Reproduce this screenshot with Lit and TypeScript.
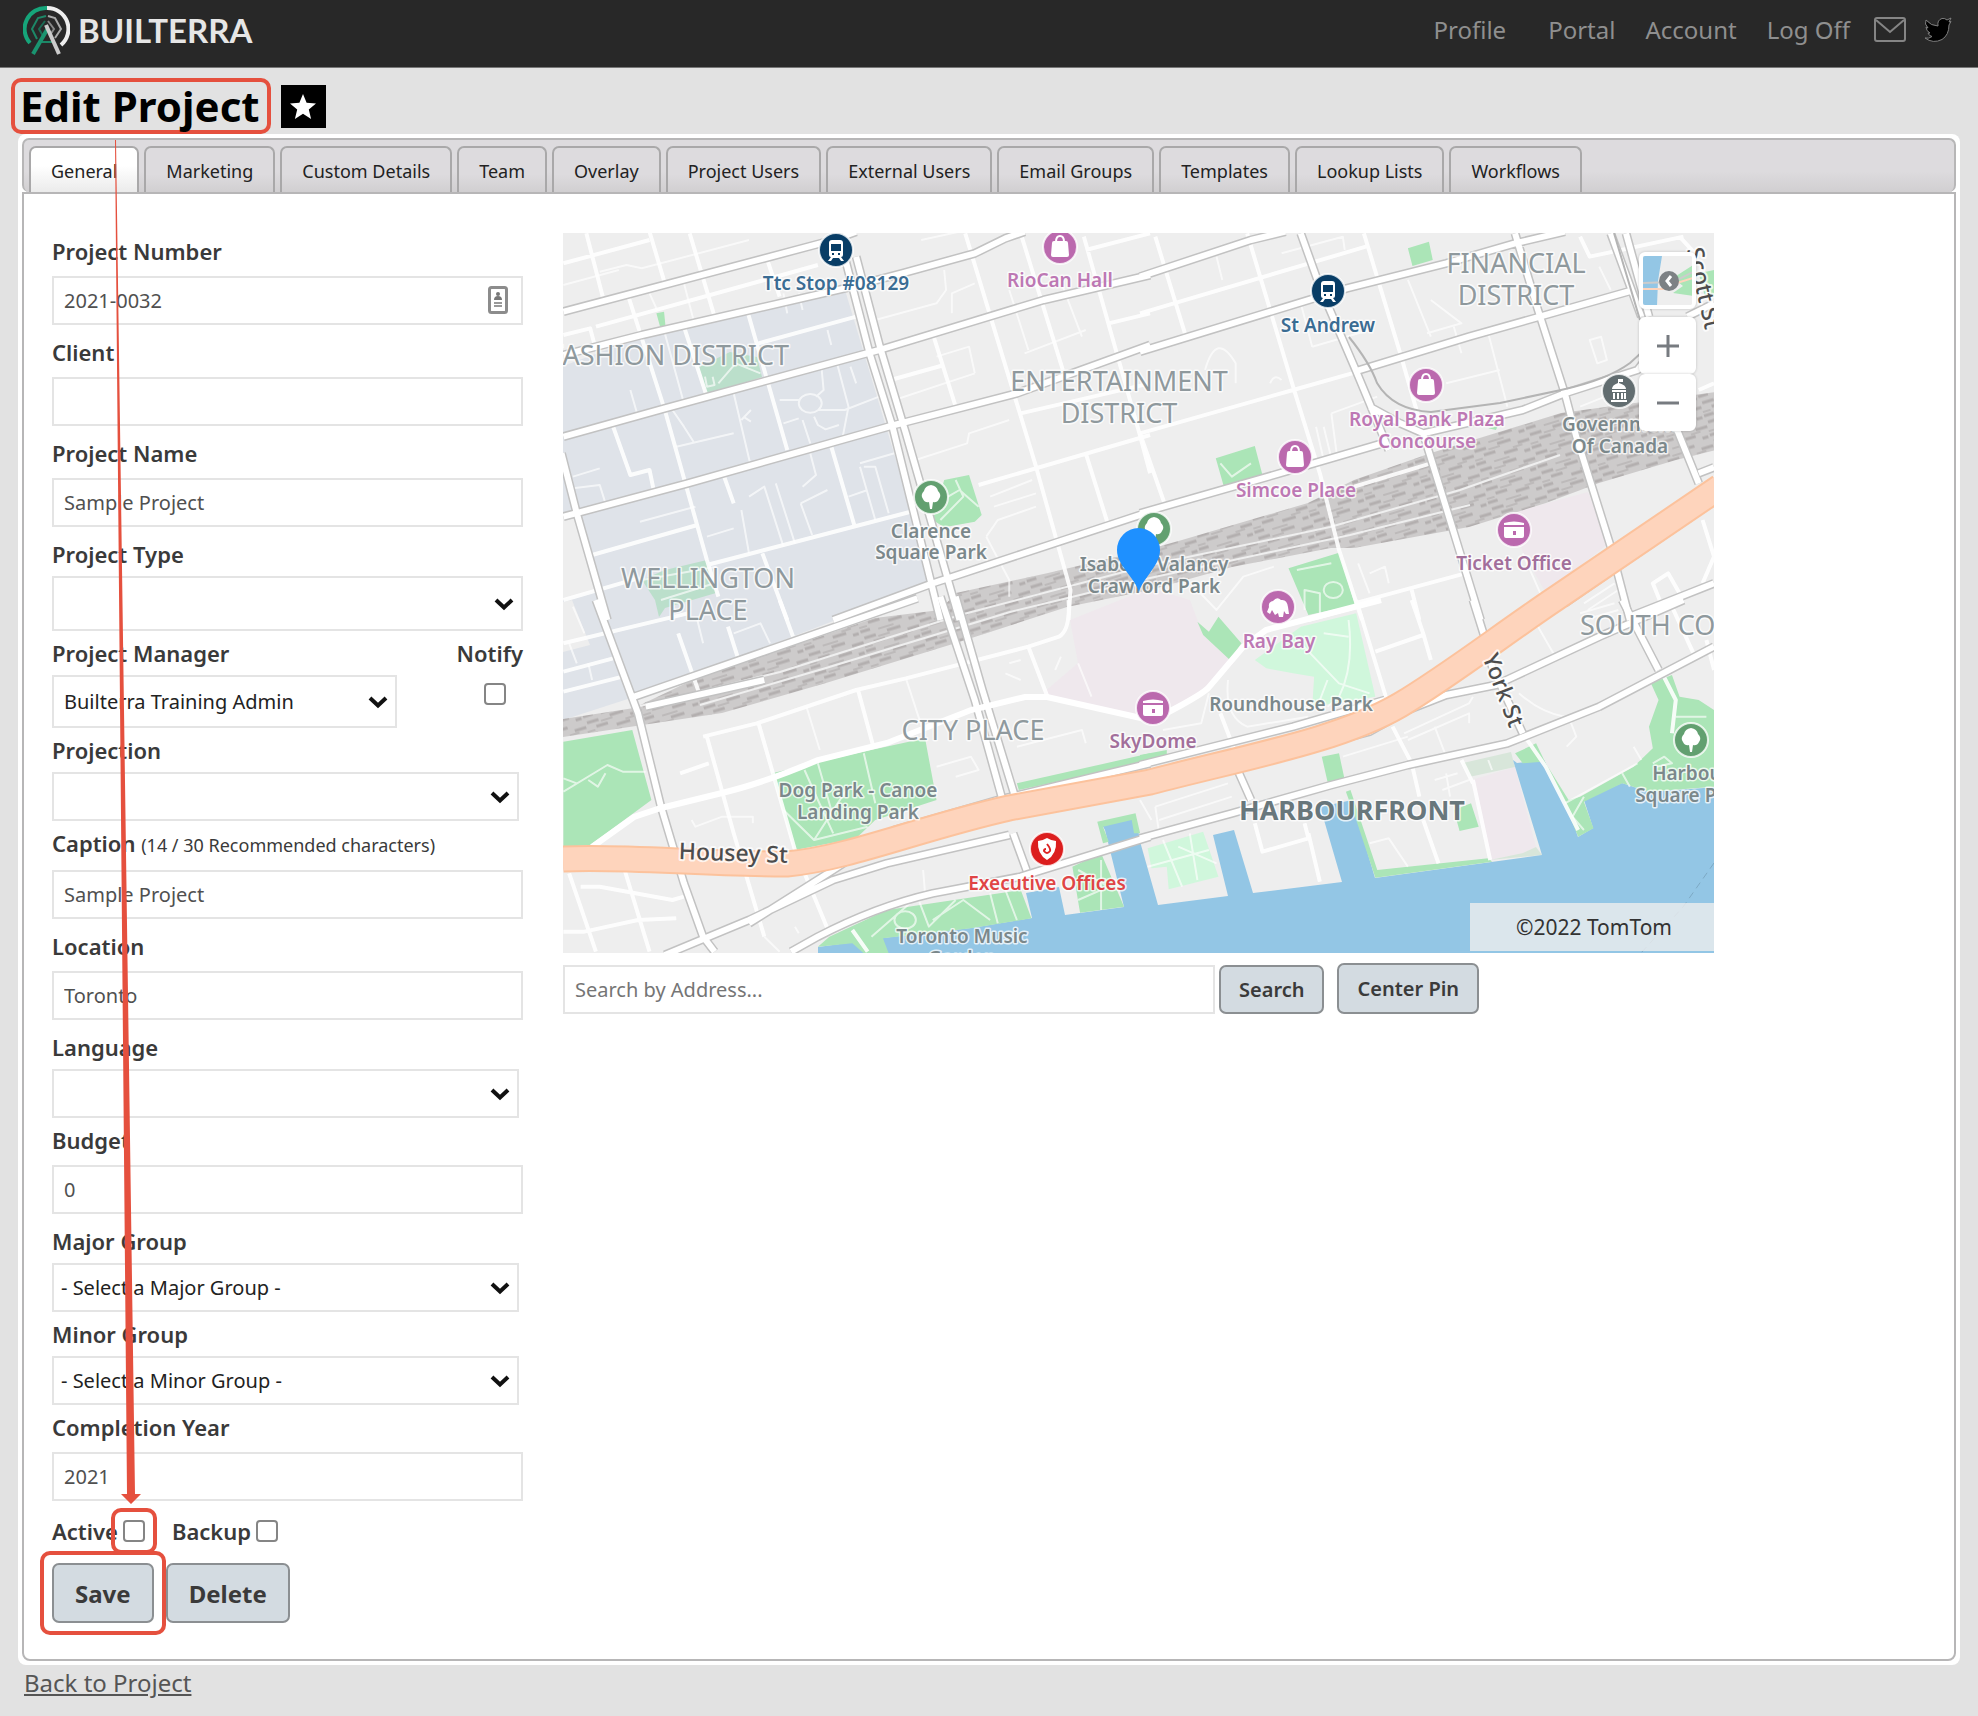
import { LitElement, html, svg, css } from "lit";
import { customElement } from "lit/decorators.js";

interface Option {
  kind: "text" | "select";
  id: string;
  label: string;
  note?: string;
  value?: string;
  size?: "tall" | "medium" | "narrow";
  badge?: boolean;
}

const TABS = [
  "General", "Marketing", "Custom Details", "Team", "Overlay", "Project Users",
  "External Users", "Email Groups", "Templates", "Lookup Lists", "Workflows",
];

const BEFORE_MANAGER: Option[] = [
  { kind: "text", id: "number", label: "Project Number", value: "2021-0032", badge: true },
  { kind: "text", id: "client", label: "Client", value: "" },
  { kind: "text", id: "name", label: "Project Name", value: "Sample Project" },
  { kind: "select", id: "type", label: "Project Type", value: "", size: "tall" },
];

const AFTER_MANAGER: Option[] = [
  { kind: "select", id: "projection", label: "Projection", value: "", size: "narrow" },
  { kind: "text", id: "caption", label: "Caption", note: "(14 / 30 Recommended characters)", value: "Sample Project" },
  { kind: "text", id: "location", label: "Location", value: "Toronto" },
  { kind: "select", id: "language", label: "Language", value: "", size: "narrow" },
  { kind: "text", id: "budget", label: "Budget", value: "0" },
  { kind: "select", id: "major", label: "Major Group", value: "- Select a Major Group -", size: "narrow" },
  { kind: "select", id: "minor", label: "Minor Group", value: "- Select a Minor Group -", size: "narrow" },
  { kind: "text", id: "year", label: "Completion Year", value: "2021" },
];

const chevron = html`<svg class="chevron" viewBox="0 0 20 14" aria-hidden="true"><path d="M2 3 L10 10.5 L18 3" /></svg>`;

/* Each map tile has its own local grid; this places one on the map canvas. */
const TILE = {
  nw: "translate(550 220) scale(.3827 .33333)",
  ne: "translate(1140 220) scale(.3827 .33333)",
  sw: "translate(550 600) scale(.3827 .33333)",
  se: "translate(1140 600) scale(.3827 .33333)",
};
type TileName = keyof typeof TILE;

const PARKS: Record<TileName, string> = {
  nw: `M278 280L298 275L302 320L288 322Z M1030 780L1095 765L1128 885L1110 905L1030 922L1000 900Z`,
  ne: `M700 85L755 65L765 120L712 138Z M198 715L300 678L320 765L220 803Z M388 1045L520 998L562 1155L440 1185Z
       M1460 160L1500 150L1500 230L1475 225Z M60 985L80 980L82 1010L55 1010Z M910 625L935 618L930 630Z`,
  sw: `M35 425L215 390L265 600L105 735L35 742Z M580 520L800 460L980 415L1010 600L850 660L800 715L640 750Z
       M730 1010L880 930L1230 870L1258 955L1100 985L870 1015L885 1060L820 1060L790 1030L700 1040Z
       M1365 800L1440 760L1500 920L1385 938Z M1430 665L1530 640L1542 700L1526 700L1520 660L1445 680L1460 725L1445 730Z
       M1220 550L1568 460L1568 485L1225 570Z`,
  se: `M150 65L165 80L180 95L205 50L265 130L235 180L165 105Z M425 0L555 0L560 15L440 40Z M0 465L70 450L70 465L0 485Z
       M475 470L520 460L535 540L490 545Z M820 630L865 610L885 680L835 693Z M538 575L550 570L620 810L910 775L920 785L615 833L565 660Z
       M980 460L1035 430L1060 490L1120 600L1150 590L1290 500L1340 445L1330 380L1355 300L1335 250L1390 225L1410 290L1460 300L1500 330L1500 560L1330 575L1260 550L1160 605L1185 685L1145 710L1105 600L1050 485L1000 490Z`,
};

const SOFT_PARKS: Record<TileName, string> = {
  nw: ``,
  ne: ``,
  sw: ``,
  se: `M300 180L420 80L565 40L615 290L450 320L455 230L400 220L330 205Z M20 745L165 695L205 830L75 868L70 800L30 805Z`,
};

const MAIN_ROADS: Record<TileName, string> = {
  nw: `M35 275L560 115L740 60L800 35 M35 405L240 345L770 205L920 160L1110 100L1190 55L1240 35
       M35 650L300 565L860 390L1290 240L1568 165 M35 890L360 790L900 615L1220 520L1568 375
       M30 700L70 880L150 1200 M772 120L835 400L895 620L1020 1200 M800 110L862 380L930 640L1070 1200
       M740 1200L1000 1090L1330 965L1568 875`,
  ne: `M0 170L290 60L380 35 M0 395L540 205L800 130L980 70L1110 35 M560 455L860 350L1290 210 M1430 290L1500 250
       M0 880L380 755L640 668 M420 40L470 200L560 440L600 550L650 690 M600 560L680 610L740 640L810 900L890 1200
       M740 640L1000 570L1110 520L1300 450L1320 420 M980 40L1040 270L1110 520L1140 650L1230 980L1280 1200
       M1230 40L1310 290 M1270 40L1330 290 M1400 620L1460 790 M1460 760L1500 742
       M1500 840L1440 890L1210 1070L1110 1150 M1280 1190L1500 1090`,
  sw: `M220 290L960 -5 M120 0L230 340L290 620L350 850L400 1010L430 1055 M1020 -10L1110 300L1180 590 M1060 -10L1130 270L1215 590
       M1210 700L1245 810 M630 1055L700 1010Q850 920 1000 880L1230 830L1568 710 M300 1065L520 960L740 840L880 790L1200 705
       M520 970L740 810L900 690L1170 600L1568 490 M250 320L560 240`,
  se: `M0 715L240 640L500 555L700 495L960 430L1200 320L1500 140 M0 495L400 380L640 300 M250 500L600 395L700 330L800 285L930 255L1200 110L1420 0
       M870 0L900 110L920 200L1000 400 M1260 0L1355 210 M255 510L290 600`,
};

const STREETS: Record<TileName, string> = {
  nw: `M95 40L140 240 M260 35L300 190 M365 40L430 290 M205 230L300 570L410 1020L440 1130 M350 320L410 530 M515 270L620 690
       M545 370L800 290 M410 1035L960 870 M110 1005L385 915 M735 680L795 915 M165 620L210 765L260 750L270 805 M555 1000L620 1200
       M1085 40L1270 740L1360 1110L1355 1200 M1230 40L1340 450 M1395 50L1540 640L1568 760 M1000 340L1060 560 M890 480L1030 435
       M1120 795L1568 645 M1400 700L1460 920 M35 130L260 60 M120 320L560 180L700 135 M35 345L105 325L120 390 M35 1140L230 1075
       M565 110L600 230 M1400 90L1568 40 M1230 580L1568 490 M1460 310L1568 280 M455 770L480 850`,
  ne: `M280 40L400 500L470 760L520 990L580 1200 M585 40L680 400L740 640 M40 50L120 350 M0 280L590 80 M0 640L70 870
       M0 640L400 510L570 455 M560 800L760 730 M560 1150L850 1060 M710 1110L730 1200 M1150 50L1175 110L1420 50 M1410 50L1450 100
       M1470 900L1500 1010L1470 1090 M1365 1160L1340 1090L1380 1060L1415 1130 M1460 510L1500 490 M440 1200L600 1150`,
  sw: `M410 410L480 700L560 1010 M400 410L540 370L800 270L930 235L1250 140L1330 110Q1360 90 1355 0 M545 370L640 750L730 1000
       M805 270L845 440 M35 130L360 40 M335 100L390 280 M465 80L490 170 M600 0L635 110 M35 215L165 175 M35 275L190 230
       M1250 140L1300 290 M50 820L120 1055 M195 810L260 1055 M80 860L130 860L320 900L350 890 M35 995L90 995L230 960L330 955
       M340 520L415 490 M790 990L830 1055`,
  se: `M210 340L250 460 M565 0L645 300 M660 380L710 490L730 590 M740 660L780 790 M710 0L740 100L760 180 M615 155L740 105
       M1000 400L1060 500L1145 690 M300 670L320 755L440 715L430 670 M440 700L470 845 M870 540L915 780 M840 480L870 550
       M1360 210L1400 300L1390 400 M1390 20L1450 170 M1480 120L1500 210 M1360 0L1380 30`,
};

const LANES: Record<TileName, string> = {
  nw: `M130 155L200 135L240 145L520 60 M35 195L180 150 M850 300L1010 250L1035 210L1030 150 M1050 280L1050 220L1110 190 M600 540L650 540
       M700 570L770 570L860 530 M690 590L700 615L720 628L755 615 M710 450L715 510L695 530 M750 430L780 560L765 650
       M650 550a30 28 0 1 0 60 0a30 28 0 1 0 -60 0 M480 520L525 740 M235 905L380 860 M520 830L560 800L610 980 M590 790L640 970
       M655 850L685 945 M655 850L725 810 M500 870L520 1000 M810 740L850 900 M820 740L850 740L885 880 M810 730L900 700 M330 680L480 640
       M320 570L350 620L375 665 M955 720L1090 670L1095 640L1200 600 M210 510L230 590 M300 340L350 550 M60 770L130 745
       M60 805L130 795L145 850 M1150 830L1260 780 M1160 860L1270 820 M1140 950L1170 900L1270 860 M1140 950L1200 1080L1200 1130
       M1200 210L1250 390 M1340 200L1390 350 M1240 400L1400 330 M780 830L830 810 M900 540L1110 460 M1110 460L1095 380L1010 410
       M500 600L525 570 M505 590L525 605 M610 610L650 595 M660 600L680 670 M680 700L695 765L660 800 M440 490L485 430L550 460
       M260 220L280 270 M350 190L375 300 M610 220L620 280 M650 220L660 270 M725 330L735 375 M785 440L800 490 M410 950L480 925
       M405 470L410 500L430 495L425 470 M1040 830L1070 810L1120 860 M1060 780L1080 830L1020 900 M240 1080L435 1040 M290 1140L430 1090 M970 60L1090 30`,
  ne: `M450 380L600 330 M420 250L450 380 M700 180L760 350 M760 240L840 310L750 340 M910 340L960 560 M800 490L940 450 M500 580L620 530
       M500 580L515 710 M460 620L480 720 M480 620L500 715 M170 450Q200 330 250 430L250 490 M1175 360L1205 350L1220 420L1195 430Z
       M370 100L530 50L535 90 M340 490Q350 460 370 480 M200 110L215 180 M210 730L240 770L290 730 M410 1050L500 1030
       M480 1110a25 24 0 1 0 50 0a25 24 0 1 0 -50 0 M430 1170L430 1110L470 1120L470 1180 M1000 1000L1050 1130 M570 1030L600 1120
       M600 1060L640 1040L650 1090 M150 1110L200 1170L270 1070L350 1040 M820 320L840 400 M680 400L860 350 M1200 140L1230 210
       M1160 1150L1240 1090 M1170 1170L1250 1110 M1150 560L1280 500`,
  sw: `M35 575L150 495L190 515L250 515 M100 540L125 560L145 520 M35 535L70 550 M670 320L705 450 M930 235L980 410 M700 490L740 650
       M820 460L850 610 M665 510L700 600L740 700 M610 630L690 720L830 680 M690 720L780 560 M370 660L380 680L450 650L530 650L530 670
       M1010 500L1100 470L1120 510L1060 530 M1220 440L1390 390L1400 430 M1190 220L1230 240 M1200 190L1230 180 M1320 210L1335 170
       M50 130L70 190 M60 20L90 100 M100 190L110 240 M385 60L400 130 M480 100L550 70L575 130 M840 1010L960 890L990 980L1060 900
       M900 960a28 26 0 1 0 56 0a28 26 0 1 0 -56 0 M1000 960L1080 900L1150 960 M1150 880L1170 970 M1190 870L1220 960 M560 1010L600 1055
       M975 810L980 880 M1380 810L1460 860L1380 900 M1440 780L1440 930 M1380 190L1415 290 M640 980L650 1000`,
  se: `M60 720L110 860 M20 800L180 750 M100 740L200 790 M130 700L150 840 M600 730L650 715L700 800 M1120 350L1140 410L1115 440
       M1030 60L1080 160 M545 60Q560 200 520 290L490 320 M420 130L520 250L600 280 M480 100L545 110 M490 240L470 300 M60 390L160 370L180 280
       M40 620L230 550 M50 660L240 590 M40 620L50 700 M690 400L860 310L870 290 M700 420L860 340L860 370 M770 380L800 470 M530 470L700 410
       M770 540L830 520 M790 570L860 540 M800 520L810 590 M990 280Q1050 340 1110 350 M1340 490L1370 470L1390 490L1350 500 M1260 520L1280 560
       M1290 440L1310 480 M1400 350L1480 350 M1110 610L1300 490 M1160 590L1130 650L1160 690 M230 240Q220 350 280 380L440 350
       M1150 40L1240 10 M1160 60L1250 30 M910 480L920 510 M0 600L30 660`,
};

const TILE_NAMES: TileName[] = ["nw", "ne", "sw", "se"];
const layer = (name: string, source: Record<TileName, string>) =>
  TILE_NAMES.map((t) => svg`<path class=${name} transform=${TILE[t]} d=${source[t]} />`);

type Label = [string, number, number, string];
const LABELS: Label[] = [
  ["ENTERTAINMENT", 1119, 391, "area"], ["DISTRICT", 1119, 423, "area"],
  ["FINANCIAL", 1516, 273, "area"], ["DISTRICT", 1516, 305, "area"],
  ["WELLINGTON", 708, 588, "area"], ["PLACE", 708, 620, "area"],
  ["CITY PLACE", 973, 740, "area"], ["HARBOURFRONT", 1352, 820, "area strong"],
  ["Ttc Stop #08129", 836, 290, "poi transit"], ["St Andrew", 1328, 332, "poi transit"],
  ["RioCan Hall", 1060, 287, "poi shop"], ["Royal Bank Plaza", 1427, 426, "poi shop"],
  ["Concourse", 1427, 448, "poi shop"], ["Simcoe Place", 1296, 497, "poi shop"],
  ["Ray Bay", 1279, 648, "poi shop"], ["Ticket Office", 1514, 570, "poi venue"],
  ["SkyDome", 1153, 748, "poi venue"], ["Clarence", 931, 538, "poi"], ["Square Park", 931, 559, "poi"],
  ["Isabella Valancy", 1154, 571, "poi"], ["Crawford Park", 1154, 593, "poi"],
  ["Government", 1620, 431, "poi"], ["Of Canada", 1620, 453, "poi"],
  ["Roundhouse Park", 1291, 711, "poi"], ["Dog Park - Canoe", 858, 797, "poi"],
  ["Landing Park", 858, 819, "poi"], ["Toronto Music", 962, 943, "poi"], ["Garden", 962, 965, "poi"],
  ["Harbour", 1691, 780, "poi"], ["Square Park", 1691, 802, "poi"],
  ["Executive Offices", 1047, 890, "poi alert"],
];

const GLYPHS: Record<string, unknown> = {
  train: svg`<path fill="#fff" fill-rule="evenodd" d="M-7 -7Q-7 -10 -4 -10H4Q7 -10 7 -7V5Q7 7 5 7L8 11H5L3 8H-3L-5 11H-8L-5 7Q-7 7 -7 5ZM-5 -6V1H5V-6ZM-4 3V5H-2V3ZM2 3V5H4V3Z"/>`,
  bag: svg`<path fill="#fff" d="M-8 -4Q-8 -6 -6 -6H6Q8 -6 8 -4L9 8Q9 10 7 10H-7Q-9 10 -9 8Z"/><path fill="none" stroke="#fff" stroke-width="2" d="M-4 -5Q-4 -11 0 -11Q4 -11 4 -5"/>`,
  tree: svg`<path fill="#fff" d="M0 -12Q6 -11 7 -6Q11 -2 8 2Q6 6 2 5L1 12H-1L-2 5Q-6 6 -8 2Q-11 -2 -7 -6Q-6 -11 0 -12Z"/>`,
  bank: svg`<path fill="#fff" d="M-1 -12H4V-9H0V-8Q7 -6 7 -2H-7Q-7 -6 -1 -8ZM-7 -1H7V1H-7ZM-6 2H-4V8H-6ZM-2 2H0V8H-2ZM2 2H4V8H2ZM5 2H7V8H5ZM-8 9H8V11H-8Z"/>`,
  stadium: svg`<path fill="#fff" fill-rule="evenodd" d="M-10 -7Q0 -10 10 -7V-5H-10ZM-10 -3H10V6Q10 8 8 8H-8Q-10 8 -10 6ZM-1 1V5H2V1Z"/>`,
  elephant: svg`<path fill="#fff" d="M-11 5L-9 0Q-10 -5 -5 -6Q-1 -11 3 -7Q9 -8 10 0L11 7H8L6 4L5 10H1L0 6L-3 8L-6 3L-8 7Z"/>`,
  shield: svg`<path fill="#fff" d="M0 -11Q5 -8 9 -8Q10 5 0 11Q-10 5 -9 -8Q-5 -8 0 -11Z"/><path fill="none" stroke="#dc2222" stroke-width="2" d="M0 -5Q4 0 3 2Q0 6 -3 2Q-3 0 -1 0"/>`,
};

const PINS: [number, number, string, string][] = [
  [836, 250, "#083d66", "train"], [1328, 291, "#083d66", "train"],
  [1060, 247, "#bb69ae", "bag"], [1426, 385, "#bb69ae", "bag"], [1295, 457, "#bb69ae", "bag"],
  [1514, 530, "#bb69ae", "stadium"], [1153, 708, "#bb69ae", "stadium"], [1278, 607, "#bb69ae", "elephant"],
  [931, 497, "#62a070", "tree"], [1154, 529, "#62a070", "tree"], [1691, 740, "#62a070", "tree"],
  [1619, 391, "#626d70", "bank"], [1047, 849, "#dc1e1e", "shield"],
];

@customElement("project-map")
export class ProjectMap extends LitElement {
  static styles = css`
    :host { display: block; position: relative; font-family: "Noto Sans", "Open Sans", sans-serif; }
    .canvas { display: block; width: 100%; height: auto; }
    path { vector-effect: non-scaling-stroke; }
    .park { fill: #abe5b7; }
    .soft-park { fill: #d0f7dc; }
    .casing, .main, .street, .lane { fill: none; stroke-linejoin: round; }
    .casing { stroke: #c2c2c2; stroke-width: 9; }
    .main { stroke: #fff; stroke-width: 6; }
    .street { stroke: #fff; stroke-width: 4; opacity: 0.9; }
    .lane { stroke: #fff; stroke-width: 2; opacity: 0.65; }
    .area, .poi, .road-name { paint-order: stroke; stroke: #fff; stroke-opacity: 0.75; stroke-linejoin: round; text-anchor: middle; }
    .area { font-size: 27px; fill: #8f999d; stroke-width: 3; }
    .strong { font-weight: 700; fill: #68777c; }
    .poi { font-size: 19px; font-weight: 600; fill: #7b888b; stroke-width: 3; }
    .transit { fill: #3a6c93; }
    .shop { fill: #bd78b4; }
    .venue { fill: #a26f9b; }
    .alert { fill: #e04545; }
    .end { text-anchor: end; }
    .start { text-anchor: start; }
    .road-name { font-size: 23px; font-weight: 500; fill: #4d4d4d; stroke-width: 4; }
    .controls { position: absolute; top: 19px; right: 18px; display: flex; flex-direction: column; }
    .control { box-sizing: border-box; width: 57px; height: 57px; padding: 0; border: 4px solid #fff; border-radius: 6px; background: #fff; box-shadow: 0 0 3px rgba(0, 0, 0, 0.2); display: grid; place-items: center; }
    .preview { margin-bottom: 8px; background: #eee; overflow: hidden; }
    .preview svg, .glyph { display: block; }
    .credit { position: absolute; right: 0; bottom: 2px; box-sizing: border-box; min-width: 244px; padding: 0 42px; line-height: 48px; font-size: 21px; text-align: right; color: #333; background: rgba(238, 238, 238, 0.8); }
  `;

  render() {
    return html`
      <svg class="canvas" viewBox="563 233 1151 720" role="img" aria-label="Map of downtown Toronto">
        <defs>
          <pattern id="tracks" width="58" height="20" patternUnits="userSpaceOnUse" patternTransform="rotate(-17)">
            <rect width="58" height="20" fill="#cdcbcb" />
            <path d="M2 3H14 M26 2H40 M46 7H58 M10 9H22 M30 13H44 M0 16H10 M50 17H56" stroke="#b3afaf" stroke-width="3" />
            <path d="M16 5H28 M0 12H8 M40 10H50 M18 18H34" stroke="#bdbaba" stroke-width="2" />
          </pattern>
        </defs>
        <rect x="563" y="233" width="1151" height="720" fill="#eee" />
        <path fill="#dfe3e9" d="M563 366L642 337L845 290L933 583L634 697L563 720Z" />
        <path fill="#eee" d="M563 515L576 516L598 590L563 600Z M563 602L572 600L590 645L563 652Z" />
        <path fill="#bbdfcb" d="M699 367L707 395L762 377L757 357L730 352Z M642 580L665 570L707 560L716 593L665 608L659 617L655 600Z" />
        <path fill="#efe8ed" d="M1070 620L1150 588L1190 600L1200 627L1234 663L1205 693L1163 710L1150 720L1043 693L1078 663Z M1511 513L1588 492L1609 543L1546 593L1523 553Z M1471 780L1515 767L1536 847L1523 853L1490 860Z" />
        <path fill="#d8e6da" d="M1463 763L1511 752L1515 767L1469 777Z M1490 860L1523 853L1536 847L1542 855Z" />
        <path fill="#93c6e5" d="M818 955V947L891 937L971 928L1032 918L1026 893L1059 887L1065 915L1124 907L1105 830L1101 823L1135 815L1141 845L1158 905L1228 896L1213 835L1234 830L1253 893L1342 882L1324 820L1320 807L1352 800L1375 878L1542 855L1513 760L1517 763L1544 760L1565 800L1578 837L1593 828L1584 800L1622 783L1649 792L1716 787V955Z" />
        <path fill="none" stroke="#7da9c4" stroke-dasharray="7 5" d="M1714 863L1683 907L1641 953" />
        ${layer("park", PARKS)} ${layer("soft-park", SOFT_PARKS)}
        <path fill="url(#tracks)" d="M563 719L634 708L703 675L780 650L875 618L940 610L956 593L1048 573L1150 549L1182 540L1308 503L1354 480L1431 453L1561 413L1716 392V450L1676 460L1599 483L1546 503L1469 527L1354 548L1331 548L1232 567L1150 590L1067 607L956 643L826 683L722 713L563 737Z" />
        <path fill="none" stroke="#efefef" stroke-width="2" d="M640 706L780 672L960 615L1150 565L1330 527L1460 490L1560 455 M700 705L826 668L1010 612L1150 578L1350 535L1470 505" />
        ${layer("lane", LANES)} ${layer("street", STREETS)} ${layer("casing", MAIN_ROADS)} ${layer("main", MAIN_ROADS)}
        <path fill="none" stroke="#b4b4b4" stroke-width="2" d="M1349 337Q1370 363 1377 383Q1393 410 1431 412L1500 403L1561 390Q1607 380 1630 363L1641 353 M1614 233L1640 320" />
        <path fill="none" stroke="#fff" stroke-width="6" d="M592 847L634 817L661 808L722 793Q764 783 818 760L887 743L971 710L1025 697H1047L1150 720L1163 715Q1205 693 1209 687L1243 647L1266 630L1381 600" />
        <path fill="none" stroke="#fcc29c" stroke-width="27" d="M563 859C625 856 700 864 787 864C850 858 920 828 1009 808L1150 782C1250 756 1340 740 1400 705C1450 675 1500 636 1555 599L1720 487" />
        <path fill="none" stroke="#fed4bc" stroke-width="23" d="M563 859C625 856 700 864 787 864C850 858 920 828 1009 808L1150 782C1250 756 1340 740 1400 705C1450 675 1500 636 1555 599L1720 487" />
        <text class="area end" x="789" y="365">FASHION DISTRICT</text>
        <text class="area start" x="1580" y="635">SOUTH CORE</text>
        <text class="road-name" x="733" y="861" transform="rotate(2 733 861)">Housey St</text>
        <text class="road-name" transform="translate(1496 693) rotate(69)">York St</text>
        <text class="road-name" transform="translate(1696 290) rotate(77)">Scott St</text>
        ${LABELS.map(([text, x, y, kind]) => svg`<text class=${kind} x=${x} y=${y}>${text}</text>`)}
        ${PINS.map(([x, y, color, glyph]) => svg`
          <g transform=${`translate(${x} ${y})`}>
            <circle r="17" fill=${color} stroke="#fff" stroke-opacity=".8" stroke-width="2" />${GLYPHS[glyph]}
          </g>`)}
        <path fill="#1e90ff" d="M1139 592C1134 576 1117 566 1117 550A21.5 22 0 0 1 1160 550C1160 566 1144 576 1139 592Z" />
      </svg>
      <div class="controls">
        <button class="control preview" aria-label="Map style">
          <svg width="50" height="50" viewBox="0 0 50 50">
            <rect width="50" height="50" fill="#eee" />
            <path fill="#93c6e5" d="M0 0H19L15 25L14 50H0Z" />
            <path fill="#abe5b7" d="M30 22L50 9V40L30 37L40 30Z" />
            <path fill="none" stroke="#ccc" stroke-width="2" d="M0 27L30 26L50 16" />
            <path fill="none" stroke="#fed4bc" stroke-width="2" d="M0 33H20L34 27L50 22" />
            <circle cx="26" cy="25" r="10" fill="#7d8184" />
            <path fill="none" stroke="#fff" stroke-width="3" d="M28 20L24 25L28 30" />
          </svg>
        </button>
        <button class="control" aria-label="Zoom in">
          <svg class="glyph" width="24" height="24" viewBox="0 0 24 24"><path d="M1 12H23M12 1V23" stroke="#777b80" stroke-width="3" /></svg>
        </button>
        <button class="control" aria-label="Zoom out">
          <svg class="glyph" width="24" height="24" viewBox="0 0 24 24"><path d="M1 12H23" stroke="#777b80" stroke-width="3" /></svg>
        </button>
      </div>
      <div class="credit">©2022 TomTom</div>
    `;
  }
}

@customElement("app-root")
export class AppRoot extends LitElement {
  static styles = css`
    :host { display: block; position: relative; box-sizing: border-box; min-height: 100vh; background: #e2e2e2; font-family: "Noto Sans", "Open Sans", sans-serif; color: #3a3a3a; }
    * { box-sizing: border-box; }
    .header { display: flex; justify-content: space-between; align-items: center; height: 68px; padding: 0 26px 8px 23px; background: #282828; border-bottom: 1px solid #777; }
    .brand { display: flex; align-items: center; gap: 8px; color: #e6e6e6; font-family: Lato, sans-serif; font-size: 33px; font-weight: 700; text-decoration: none; }
    .brand svg, .nav svg { display: block; }
    .nav { display: flex; align-items: center; gap: 30px; }
    .nav-link { color: #8f8f8f; font-size: 24px; line-height: 32px; text-decoration: none; }
    .first { margin-right: 12px; }
    .social { display: flex; gap: 18px; margin-left: -6px; }
    .title-row { display: flex; align-items: center; gap: 10px; padding: 10px 11px 0; }
    .title { margin: 0; height: 56px; padding: 0 7px 0 5px; border: 4px solid #e5503e; border-radius: 10px; font-size: 42px; line-height: 48px; font-weight: 700; color: #000; }
    .star { width: 45px; height: 43px; padding: 0; border: 0; background: #000; display: grid; place-items: center; }
    .panel { margin: 0 18px; padding: 4px; background: #fff; border-radius: 8px; }
    .tabs { display: flex; gap: 5px; height: 54px; padding: 6px 5px 0; border: 2px solid #b7b6b7; border-bottom: 0; border-radius: 7px; background: linear-gradient(#dddbde 60%, #d1cfd1); }
    .tab { flex: none; height: 46px; padding: 0 20px; border: 2px solid #a9a8a9; border-bottom: 0; border-radius: 7px 7px 0 0; font-size: 18px; line-height: 46px; color: #222; text-decoration: none; background: linear-gradient(#dddbde 60%, #d1cfd1); }
    .current { background: linear-gradient(#fff 40%, #ebebeb); }
    .content { display: flex; align-items: flex-start; gap: 40px; padding: 39px 28px 36px; border: 2px solid #b7b6b7; border-radius: 0 0 8px 8px; }
    .form { flex: none; width: 471px; padding-top: 2px; }
    .field { margin-bottom: 11px; }
    .label { display: block; margin-bottom: 9px; font-size: 22px; line-height: 32px; font-weight: 600; }
    .note { font-size: 18px; font-weight: 400; }
    .box { position: relative; display: block; }
    .input { display: block; width: 100%; height: 49px; padding: 0 10px; border: 2px solid #e4e4e4; background: #fff; font: 400 20px "Noto Sans", sans-serif; color: #505050; }
    .input::placeholder { color: #757575; }
    .select-field { margin-bottom: 6px; }
    .select-field .label { margin-bottom: 6px; }
    .select { display: block; width: 100%; height: 49px; padding: 0 40px 0 7px; border: 2px solid #e4e4e4; border-radius: 0; appearance: none; background: #fff; font: 400 20px "Noto Sans", sans-serif; color: #222; }
    .tall .select { height: 55px; }
    .medium .select { height: 53px; padding-left: 10px; }
    .narrow .box { width: 467px; }
    .chevron { position: absolute; right: 9px; top: calc(50% - 7px); width: 20px; height: 14px; pointer-events: none; fill: none; stroke: #111; stroke-width: 4; }
    .badge { position: absolute; right: 15px; top: 10px; }
    .manager { display: flex; justify-content: space-between; }
    .manager .medium { width: 345px; }
    .notify { display: flex; flex-direction: column; align-items: center; }
    .check { width: 22px; height: 22px; margin: 0; appearance: none; border: 2px solid #858585; border-radius: 4px; background: #fff; }
    .notify .check { margin: 14px 0 0 10px; }
    .notify .label { margin: 0; }
    .flags { display: flex; align-items: center; gap: 27px; height: 38px; margin-bottom: 13px; }
    .flag { display: flex; align-items: center; gap: 5px; }
    .flag .label { margin: 0; }
    .marked { position: relative; display: grid; }
    .marked::after { content: ""; position: absolute; inset: -12px; border: 4px solid #e5503e; border-radius: 10px; pointer-events: none; }
    .actions { display: flex; gap: 12px; }
    .button { padding: 0 18px; height: 49px; border: 2px solid #8b8f92; border-radius: 7px; background: #d3dbe1; font: 600 20px "Noto Sans", sans-serif; color: #3a3a3a; }
    .large { height: 60px; padding: 0 21px; font-size: 24px; font-weight: 700; }
    .map-column { flex: 0 1 1151px; min-width: 0; }
    .search { display: flex; align-items: flex-end; margin-top: 10px; }
    .search .input { flex: 0 1 652px; }
    .search .button { flex: none; margin-left: 4px; }
    .search .center { height: 51px; margin-left: 13px; }
    .back { display: inline-block; margin: 1px 0 0 24px; font-size: 24px; line-height: 34px; color: #555; }
    .arrow { position: absolute; left: 111px; top: 140px; width: 32px; height: 1364px; pointer-events: none; fill: #e5503e; }
  `;

  private field(o: Option) {
    if (o.kind === "select") {
      return html`<div class="field select-field ${o.size ?? ""}">
        <label class="label" for=${o.id}>${o.label}</label>
        <span class="box"><select class="select" id=${o.id}><option>${o.value}</option></select>${chevron}</span>
      </div>`;
    }
    return html`<div class="field">
      <label class="label" for=${o.id}>${o.label}${o.note ? html` <span class="note">${o.note}</span>` : ""}</label>
      <span class="box"><input class="input" id=${o.id} type="text" .value=${o.value ?? ""} />${o.badge
        ? html`<svg class="badge" width="20" height="28" viewBox="0 0 20 28" aria-hidden="true">
            <rect x="1.5" y="1.5" width="17" height="25" rx="2" fill="#fff" stroke="#8c8c8c" stroke-width="3" />
            <circle cx="10" cy="8" r="2" fill="#777" /><path fill="#777" d="M6 14Q6 10 10 10Q14 10 14 14Z" />
            <path stroke="#999" stroke-width="2" d="M6 17H14M6 20H14" />
          </svg>`
        : ""}</span>
    </div>`;
  }

  render() {
    return html`
      <header class="header">
        <a class="brand" href="#">
          <svg width="47" height="50" viewBox="0 0 47 50" aria-hidden="true">
            <g fill="none" stroke="#16a57a">
              <path stroke-width="4" d="M24 3A21 21 0 0 0 7 38" />
              <path stroke-width="2" stroke="#1d8767" d="M23 11L15 13L9 24L14 34 M17 37H29" />
              <path stroke-width="2" stroke="#1b6b54" d="M22 16L16 24L20 31" />
              <path stroke-width="4" stroke="#1a9470" d="M10 49L25 23" />
            </g>
            <g fill="none" stroke="#eee">
              <path stroke-width="4" d="M24 3A21 21 0 0 1 38 40" />
              <path stroke-width="2" d="M25 11L32 13L38 24L32 33" stroke="#aaa" />
              <path stroke-width="2" d="M25 16L31 24L27 30" stroke="#888" />
              <path stroke-width="4" d="M36 49L23 20" stroke="#ccc" />
            </g>
          </svg>
          <span>BUILTERRA</span>
        </a>
        <nav class="nav">
          <a class="nav-link first" href="#">Profile</a>
          <a class="nav-link" href="#">Portal</a>
          <a class="nav-link" href="#">Account</a>
          <a class="nav-link" href="#">Log Off</a>
          <span class="social">
            <a href="#" aria-label="Email"><svg width="32" height="25" viewBox="0 0 32 25" fill="none" stroke="#858585" stroke-width="2"><rect x="1" y="1" width="30" height="23" rx="2" /><path d="M2 3L16 15L30 3" /></svg></a>
            <a href="#" aria-label="Twitter"><svg width="28" height="26" viewBox="0 0 28 26" fill="#000" stroke="#808080" stroke-width="1"><path d="M1 21Q5 22 8 19.500Q5 19 4 16H6Q2 14 2 10L4 11Q0 7 2 3Q7 9 14 9Q13 3 18 1.500Q21 1 23 3L27 1L25 5L27 4.500L25 8Q25 18 18 22.500Q9 27 1 21Z" /></svg></a>
          </span>
        </nav>
      </header>

      <div class="title-row">
        <h1 class="title">Edit Project</h1>
        <button class="star" aria-label="Favourite"><svg width="28" height="27" viewBox="0 0 28 27" fill="#fff"><path d="M14 1L17.600 9.700L27 10.400L19.800 16.500L22.100 26L14 20.800L5.900 26L8.200 16.500L1 10.400L10.400 9.700Z" /></svg></button>
      </div>

      <main class="panel">
        <nav class="tabs">
          ${TABS.map((t, i) => html`<a class="tab ${i === 0 ? "current" : ""}" href="#">${t}</a>`)}
        </nav>
        <div class="content">
          <form class="form">
            ${BEFORE_MANAGER.map((o) => this.field(o))}
            <div class="manager">
              ${this.field({ kind: "select", id: "manager", label: "Project Manager", value: "Builterra Training Admin", size: "medium" })}
              <div class="notify">
                <label class="label" for="notify">Notify</label>
                <input class="check" id="notify" type="checkbox" />
              </div>
            </div>
            ${AFTER_MANAGER.map((o) => this.field(o))}
            <div class="flags">
              <span class="flag"><label class="label" for="active">Active</label><span class="marked"><input class="check" id="active" type="checkbox" /></span></span>
              <span class="flag"><label class="label" for="backup">Backup</label><input class="check" id="backup" type="checkbox" /></span>
            </div>
            <div class="actions">
              <span class="marked"><button class="button large" type="button">Save</button></span>
              <button class="button large" type="button">Delete</button>
            </div>
          </form>
          <section class="map-column">
            <project-map></project-map>
            <div class="search">
              <input class="input" type="text" aria-label="Search by Address" placeholder="Search by Address..." />
              <button class="button" type="button">Search</button>
              <button class="button center" type="button">Center Pin</button>
            </div>
          </section>
        </div>
      </main>
      <a class="back" href="#">Back to Project</a>

      <svg class="arrow" viewBox="0 0 32 1364" aria-hidden="true"><path d="M4 0L5 0L24 1354L30 1354L20 1364L10 1354L16 1354Z" /></svg>
    `;
  }
}
